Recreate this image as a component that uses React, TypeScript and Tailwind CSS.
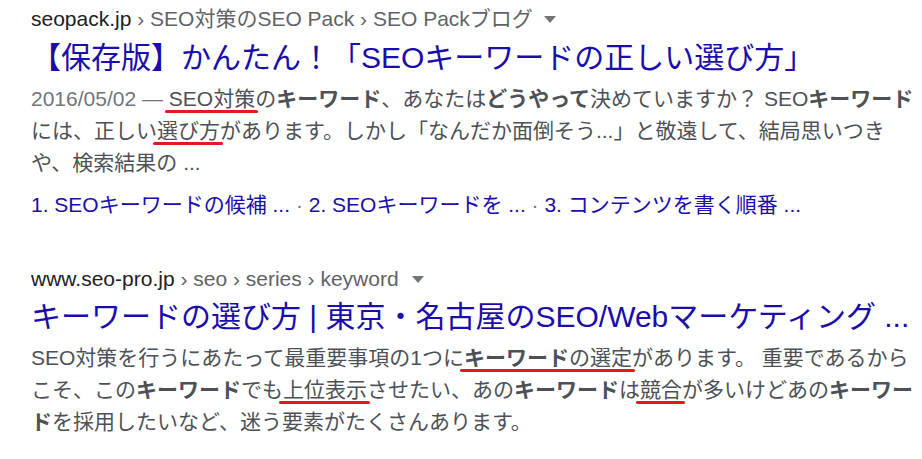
import React from "react";

const Ul = ({ children }: { children: React.ReactNode }) => (
  <span className="relative">
    {children}
    <span className="absolute left-[-4px] right-[-3px] top-full mt-[0px] h-[3px] rounded-full bg-[#e8161f]" />
  </span>
);

const B = ({ children }: { children: React.ReactNode }) => (
  <b className="font-bold text-[#4d5156]">{children}</b>
);

const Arrow = ({ cls }: { cls: string }) => (
  <svg className={cls} width="12" height="7" viewBox="0 0 12 7">
    <path d="M0 0 L12 0 L6 7 Z" fill="#70757a" />
  </svg>
);

const Dot = () => <span className="text-[#70757a]"> · </span>;

export default function App() {
  return (
    <div className="w-[922px] h-[459px] bg-white pl-[31px] pt-[4px] overflow-hidden font-[family-name:'Liberation_Sans','Noto_Sans_CJK_JP',sans-serif]">
      {/* Result 1 */}
      <div className="flex items-center whitespace-nowrap text-[21px] leading-[30px] text-[#202124]">
        <span>
          seopack.jp<span className="text-[#5f6368]"> › SEO対策のSEO Pack › SEO Packブログ</span>
        </span>
        <Arrow cls="ml-[11px] mt-[1px]" />
      </div>
      <div className="mt-[5px] whitespace-nowrap text-[30px] leading-[38px] text-[#1a0dab]">
        【保存版】かんたん！「SEOキーワードの正しい選び方」
      </div>
      <div className="mt-[6px] whitespace-nowrap text-[21px] leading-[32px] text-[#4d5156]">
        <div>
          <span className="text-[#70757a]">2016/05/02 — </span>
          <Ul>SEO対策</Ul>の<B>キーワード</B>、あなたは<B>どうやって</B>決めていますか？ SEO<B>キーワード</B>
        </div>
        <div>
          には、正しい<Ul>選び方</Ul>があります。しかし「なんだか面倒そう...」と敬遠して、結局思いつき
        </div>
        <div>や、検索結果の ...</div>
      </div>
      <div className="mt-[10px] whitespace-nowrap text-[21px] leading-[32px] text-[#1a0dab]">
        1. SEOキーワードの候補 ...<Dot />2. SEOキーワードを ...<Dot />3. コンテンツを書く順番 ...
      </div>

      {/* Result 2 */}
      <div className="mt-[43px] flex items-center whitespace-nowrap text-[21px] leading-[30px] text-[#202124]">
        <span>
          www.seo-pro.jp<span className="text-[#5f6368]"> › seo › series › keyword</span>
        </span>
        <Arrow cls="ml-[13px] mt-[1px]" />
      </div>
      <div className="mt-[4px] whitespace-nowrap text-[30px] leading-[38px] text-[#1a0dab]">
        キーワードの選び方 | 東京・名古屋のSEO/Webマーケティング ...
      </div>
      <div className="mt-[6px] whitespace-nowrap text-[21px] leading-[32px] text-[#4d5156]">
        <div>
          SEO対策を行うにあたって最重要事項の1つに<Ul><B>キーワード</B>の選定</Ul>があります。 重要であるから
        </div>
        <div>
          こそ、この<B>キーワード</B>でも<Ul>上位表示</Ul>させたい、あの<B>キーワード</B>は<Ul>競合</Ul>が多いけどあの<B>キーワー</B>
        </div>
        <div>
          <B>ド</B>を採用したいなど、迷う要素がたくさんあります。
        </div>
      </div>
    </div>
  );
}
